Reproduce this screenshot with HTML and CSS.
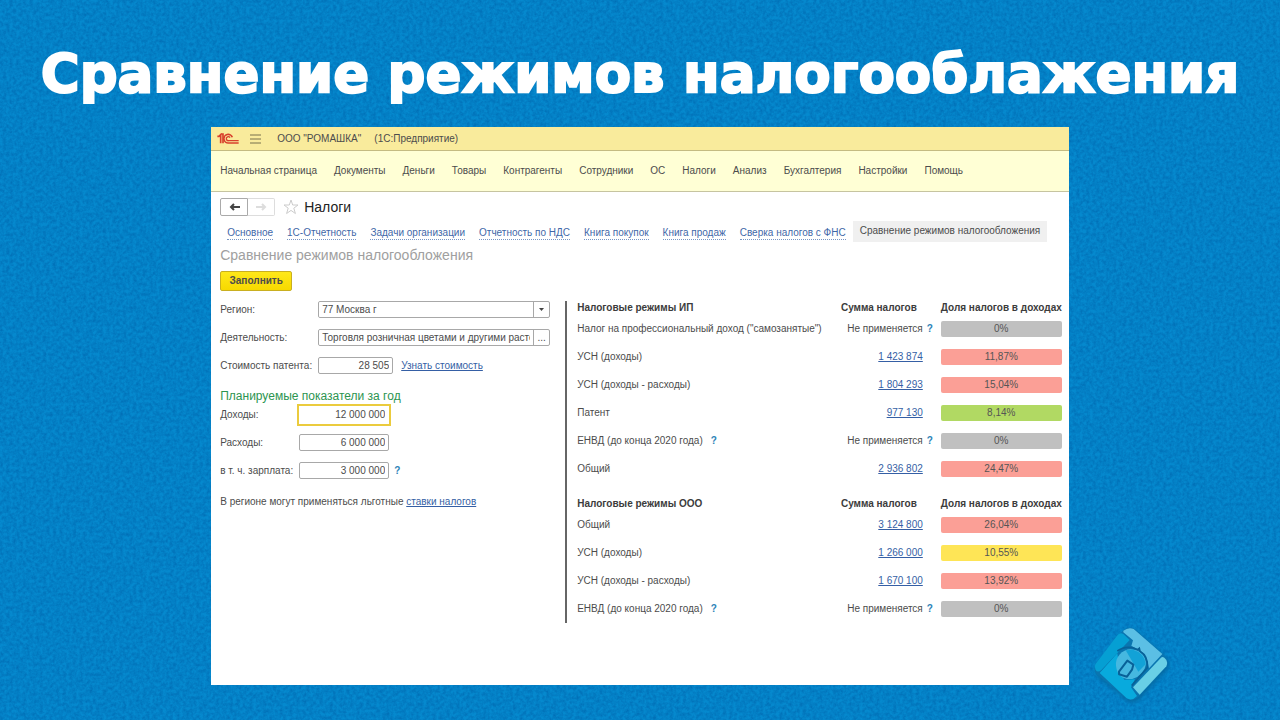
FILE: index.html
```html
<!DOCTYPE html>
<html lang="ru">
<head>
<meta charset="utf-8">
<meta name="viewport" content="width=device-width, initial-scale=1">
<title>Сравнение режимов налогооблажения</title>
<link rel="stylesheet" href="styles.css">
</head>
<body>
<svg class="grain" aria-hidden="true">
  <filter id="grain" x="0" y="0" width="100%" height="100%" color-interpolation-filters="sRGB">
    <feTurbulence type="fractalNoise" baseFrequency="0.3" numOctaves="3" seed="4"/>
    <feColorMatrix values="0 0 0 0 0  0 0 0 0 0.42  0 0 0 0 0.7  1.400 0 0 0 -0.400"/>
  </filter>
  <rect width="100%" height="100%" filter="url(#grain)"/>
</svg>
<div class="slide">
  <h1 class="slide-title">Сравнение режимов налогооблажения</h1>
  <div class="stage">
    <main class="window">
      <header class="titlebar">
        <svg class="logo-1c" viewBox="0 0 66 33" role="img" aria-label="1С">
          <g fill="none" stroke="#d8402c" stroke-width="5">
            <path d="M1 10h5l5-5v26M18 31V3h-5"/>
            <path d="M46 13a13 13 0 1 0-11 17h30"/>
            <path d="M39 14a6 6 0 1 0-4 9h30" stroke-width="4"/>
          </g>
        </svg>
        <button class="menu-button" type="button" aria-label="Меню">
          <svg viewBox="0 0 11 10"><path d="M0 1h11M0 5h11M0 9h11" stroke="#77704c" stroke-width="1"/></svg>
        </button>
        <span class="company">ООО "РОМАШКА"</span>
        <span>(1С:Предприятие)</span>
      </header>
      <nav class="sections">
        <a href="#">Начальная страница</a><a href="#">Документы</a><a href="#">Деньги</a><a href="#">Товары</a><a href="#">Контрагенты</a><a href="#">Сотрудники</a><a href="#">ОС</a><a href="#">Налоги</a><a href="#">Анализ</a><a href="#">Бухгалтерия</a><a href="#">Настройки</a><a href="#">Помощь</a>
      </nav>
      <div class="page">
        <div class="heading">
          <div class="history">
            <button type="button" class="back" aria-label="Назад"><svg viewBox="0 0 11 8"><path d="M11 4H2M5 1L2 4l3 3" fill="none" stroke="#444" stroke-width="2"/></svg></button>
            <button type="button" class="forward" aria-label="Вперёд" disabled><svg viewBox="0 0 11 8"><path d="M0 4h9M6 1l3 3-3 3" fill="none" stroke="#ddd" stroke-width="2"/></svg></button>
          </div>
          <button type="button" class="star" aria-label="В избранное"><svg viewBox="0 0 16 16"><path d="M8 1l1.700 5h5.300l-4.200 3.200 1.600 5.300L8 11.400l-4.400 3.100 1.600-5.300L1 6h5.300z" fill="none" stroke="#ccc"/></svg></button>
          <h2>Налоги</h2>
        </div>
        <nav class="tabs">
          <a href="#">Основное</a><a href="#">1С-Отчетность</a><a href="#">Задачи организации</a><a href="#">Отчетность по НДС</a><a href="#">Книга покупок</a><a href="#">Книга продаж</a><a href="#">Сверка налогов с ФНС</a><span class="current" aria-current="page">Сравнение режимов налогообложения</span>
        </nav>
        <h3 class="subtitle">Сравнение режимов налогообложения</h3>
        <button type="button" class="fill-button">Заполнить</button>
        <div class="columns">
          <form class="params">
            <div class="row">
              <label for="region">Регион:</label>
              <div class="combo">
                <select id="region"><option>77 Москва г</option></select>
                <svg class="caret" viewBox="0 0 15 15" aria-hidden="true"><path d="M5 6h5L7.500 9z" fill="#444"/></svg>
              </div>
            </div>
            <div class="row">
              <label for="activity">Деятельность:</label>
              <div class="combo">
                <input id="activity" type="text" value="Торговля розничная цветами и другими растениями">
                <button type="button" aria-label="Выбрать">...</button>
              </div>
            </div>
            <div class="row">
              <label for="patent">Стоимость патента:</label>
              <input class="number patent" id="patent" type="text" value="28 505">
              <a class="link" href="#">Узнать стоимость</a>
            </div>
            <h4>Планируемые показатели за год</h4>
            <div class="row plan">
              <label for="income">Доходы:</label>
              <input class="number active" id="income" type="text" value="12 000 000">
            </div>
            <div class="row plan">
              <label for="expense">Расходы:</label>
              <input class="number" id="expense" type="text" value="6 000 000">
            </div>
            <div class="row plan">
              <label for="salary">в т. ч. зарплата:</label>
              <input class="number" id="salary" type="text" value="3 000 000">
              <span class="help">?</span>
            </div>
            <p>В регионе могут применяться льготные <a class="link" href="#">ставки налогов</a></p>
          </form>
          <div class="result">
            <table>
              <colgroup><col><col class="col-sum"><col class="col-help"><col class="col-share"></colgroup>
              <tbody>
                <tr class="head"><th scope="col">Налоговые режимы ИП</th><th scope="col" class="sum">Сумма налогов</th><th></th><th scope="col">Доля налогов в доходах</th></tr>
                <tr><td>Налог на профессиональный доход ("самозанятые")</td><td class="sum">Не применяется</td><td class="help">?</td><td><div class="share none">0%</div></td></tr>
                <tr><td>УСН (доходы)</td><td class="sum"><a class="link" href="#">1 423 874</a></td><td></td><td><div class="share high">11,87%</div></td></tr>
                <tr><td>УСН (доходы - расходы)</td><td class="sum"><a class="link" href="#">1 804 293</a></td><td></td><td><div class="share high">15,04%</div></td></tr>
                <tr><td>Патент</td><td class="sum"><a class="link" href="#">977 130</a></td><td></td><td><div class="share low">8,14%</div></td></tr>
                <tr><td>ЕНВД (до конца 2020 года)<span class="help hint">?</span></td><td class="sum">Не применяется</td><td class="help">?</td><td><div class="share none">0%</div></td></tr>
                <tr><td>Общий</td><td class="sum"><a class="link" href="#">2 936 802</a></td><td></td><td><div class="share high">24,47%</div></td></tr>
              </tbody>
              <tbody>
                <tr class="head second"><th scope="col">Налоговые режимы ООО</th><th scope="col" class="sum">Сумма налогов</th><th></th><th scope="col">Доля налогов в доходах</th></tr>
                <tr><td>Общий</td><td class="sum"><a class="link" href="#">3 124 800</a></td><td></td><td><div class="share high">26,04%</div></td></tr>
                <tr><td>УСН (доходы)</td><td class="sum"><a class="link" href="#">1 266 000</a></td><td></td><td><div class="share medium">10,55%</div></td></tr>
                <tr><td>УСН (доходы - расходы)</td><td class="sum"><a class="link" href="#">1 670 100</a></td><td></td><td><div class="share high">13,92%</div></td></tr>
                <tr><td>ЕНВД (до конца 2020 года)<span class="help hint">?</span></td><td class="sum">Не применяется</td><td class="help">?</td><td><div class="share none">0%</div></td></tr>
              </tbody>
            </table>
          </div>
        </div>
      </div>
    </main>
    <svg class="brand" viewBox="40 30 231 231" role="img" aria-label="Логотип">
      <path d="M127 50Q145 32 165 42L255 122Q270 138 260 155L176 246Q158 263 140 250L50 178Q41 163 49 146L118 64Z" fill="#0a75b0"/>
      <path d="M47 148L112 62Q121 51 131 57L150 75L65 165Q54 174 48 165Q43 158 47 148Z" fill="#059fd3"/>
      <path d="M131 47Q147 35 162 42L248 117L208 160Q204 120 178 104L155 93L160 76L131 52Z" fill="#5bbfe5"/>
      <path d="M244 128Q248 124 254 128Q267 138 260 154L180 239L160 217Z" fill="#69cfe6"/>
      <path d="M60 174L113 115Q120 174 134 194L166 193L154 217L172 243Q158 259 141 250Z" fill="#08aadd"/>
      <path d="M109 153A45 45 0 0 1 153 103Q196 106 199 147Q194 180 158 192Q114 196 109 153Z" fill="#46b8e0"/>
      <path d="M138 106L160 104Q196 114 198 148L176 170Z" fill="#12a2d7"/>
      <path d="M113 108Q132 94 158 98L174 104L179 100L181 109Q206 124 203 158L156 212" fill="none" stroke="#086198" stroke-width="5"/>
      <path d="M118 170L143 137L161 149L157 164L142 185L118 178Z" fill="#45b7df" stroke="#086198" stroke-width="6" stroke-linejoin="round"/>
    </svg>
  </div>
</div>
</body>
</html>
```
FILE: styles.css
```css
* { box-sizing: border-box; }
body {
  margin: 0;
  background: #0589ce;
  color: #4c4c4c;
  font: 10px/14px "Liberation Sans", Arial, sans-serif;
}
.grain { position: absolute; inset: 0; width: 100%; height: 100%; z-index: -1; }
h1, h2, h3, h4, p { margin: 0; font-weight: normal; }
button, input, select { font: inherit; color: inherit; padding: 0; margin: 0; }
button svg { display: block; }
a { color: inherit; text-decoration: none; }

.slide { min-height: 100vh; display: flex; flex-direction: column; padding: 44px 0 18px; }
.slide-title {
  color: #fff;
  font: bold 53px/60px "DejaVu Sans", sans-serif;
  -webkit-text-stroke: 2px #fff;
  text-align: center;
  white-space: nowrap;
  margin-bottom: 23px;
}
.stage { flex: 1; display: grid; grid-template-columns: 1fr 67% 1fr; }
.window { grid-column: 2; background: #fff; margin-bottom: 17px; }
.brand { width: 77px; height: 77px; align-self: end; margin-left: 24px; filter: drop-shadow(1px 2px 2px #0568a0); }

.titlebar {
  display: flex;
  align-items: center;
  height: 24px;
  padding: 0 6px;
  background: #f9eb9c;
  border-bottom: 1px solid #c4bb82;
}
.logo-1c { width: 22px; height: 11px; margin-right: 11px; }
.menu-button { border: 0; background: none; margin-right: 16px; }
.menu-button svg { width: 11px; height: 10px; }
.company { margin-right: 13px; }
.sections {
  display: flex;
  align-items: center;
  gap: 17px;
  height: 41px;
  padding: 0 9px;
  background: #ffffd5;
  border-bottom: 1px solid #c6c4a0;
  white-space: nowrap;
}
.page { padding: 6px 7px 0 9px; }
.heading { display: flex; align-items: center; height: 18px; }
.history { display: flex; }
.history button { display: grid; place-items: center; width: 27px; height: 18px; background: #fff; border: 1px solid #ddd; }
.history .back { width: 28px; border-color: #aaa; border-radius: 2px 0 0 2px; }
.history .forward { border-left: 0; border-radius: 0 2px 2px 0; }
.history svg { width: 11px; height: 8px; }
.star { border: 0; background: none; margin: 0 5px 0 8px; }
.star svg { width: 16px; height: 16px; }
h2 { color: #222; font-size: 14px; line-height: 18px; }
.tabs { display: flex; align-items: flex-end; gap: 14px; padding-left: 7px; margin-top: 5px; white-space: nowrap; }
.tabs a { color: #3f68a8; line-height: 12px; border-bottom: 1px dotted #7795c4; margin-bottom: 2px; }
.tabs .current { background: #f0f0f0; padding: 3px 7px 4px; margin-left: -7px; }
.subtitle { color: #a0a0a0; font-size: 14px; line-height: 18px; margin-top: 4px; }
.fill-button {
  display: block;
  width: 72px;
  height: 20px;
  margin-top: 7px;
  font-weight: bold;
  background: linear-gradient(#ffe81a, #f7d900);
  border: 1px solid #c9af20;
  border-radius: 2px;
}
.columns { display: grid; grid-template-columns: 345px 1fr; margin-top: 10px; }
.row { display: flex; align-items: center; height: 17px; margin-bottom: 11px; }
.params { padding-right: 15px; }
.params label { flex: none; width: 98px; }
.params .plan label { width: 79px; }
.params input, .params select { background: #fff; border: 1px solid #a8a8a8; border-radius: 2px; height: 17px; padding: 0 3px; outline: 0; }
.combo { flex: 1; display: flex; border: 1px solid #a8a8a8; border-radius: 2px; height: 17px; background: #fff; }
.params .combo input, .params .combo select { flex: 1; min-width: 0; height: 15px; border: 0; appearance: none; }
.combo button, .caret { flex: none; width: 16px; height: 15px; background: none; border: 0; border-left: 1px solid #a8a8a8; line-height: 10px; }
.params .number { width: 90px; text-align: right; }
.params .patent { width: 75px; margin-right: 8px; }
.params .active { width: 94px; height: 22px; margin-left: -2px; padding-right: 4px; border: 2px solid #ebcb3d; border-radius: 0; }
.link { color: #355fa5; text-decoration: underline; }
.help { color: #2d83b8; font-weight: bold; }
.row .help { margin-left: 5px; }
h4 { color: #2c9450; font-size: 12px; line-height: 14px; margin: 15px 0 3px; }
.params p { margin-top: 16px; }
.result { align-self: start; border-left: 2px solid #666; padding-left: 10px; }
table { width: 100%; table-layout: fixed; border-collapse: collapse; }
.col-sum { width: 90px; }
.col-help { width: 18px; }
.col-share { width: 121px; }
td, th { padding: 0; text-align: left; white-space: nowrap; height: 28px; }
th { color: #3c3c3c; height: 14px; line-height: 14px; }
.second th { height: 28px; vertical-align: bottom; }
.sum { text-align: right; }
th.sum { padding-right: 6px; }
td.help { padding-left: 4px; }
.hint { margin-left: 8px; }
.share { height: 16px; line-height: 16px; text-align: center; border-radius: 2px; color: #555; }
.none { background: #c0c0c0; }
.high { background: #fb9f96; }
.low { background: #b1d963; }
.medium { background: #fee556; }
```
